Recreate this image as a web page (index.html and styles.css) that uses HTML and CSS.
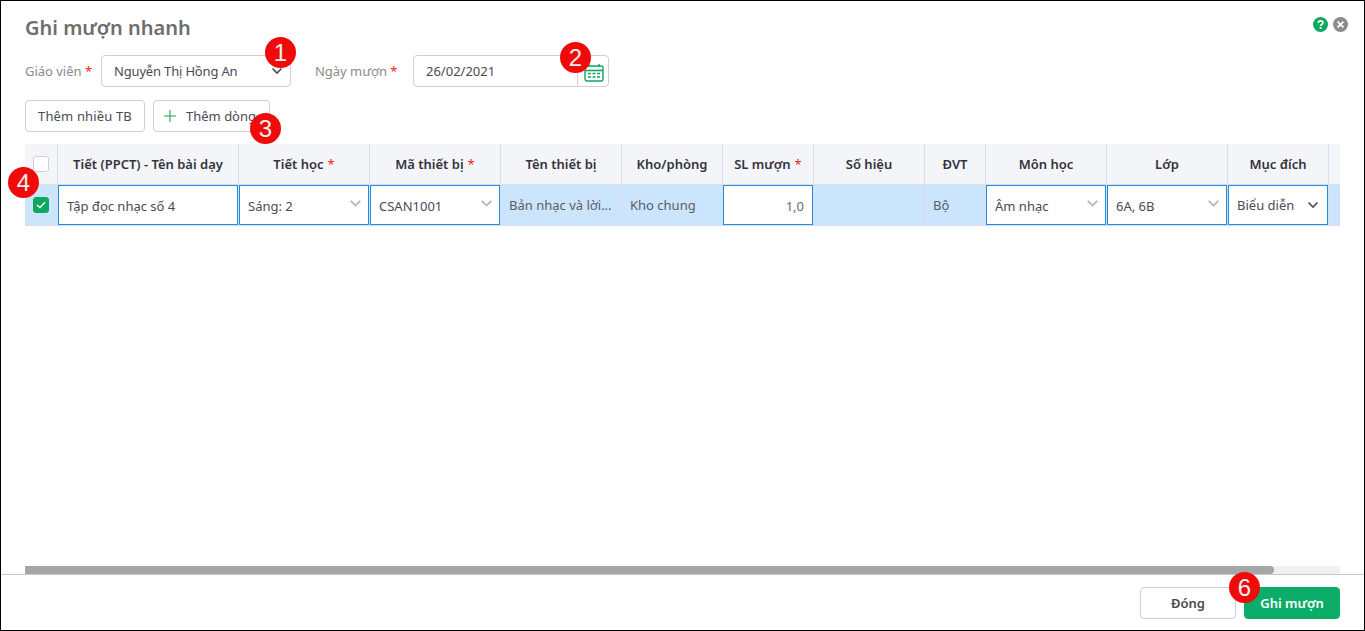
FILE: index.html
```html
<!DOCTYPE html>
<html lang="vi">
<head>
<meta charset="utf-8">
<title>Ghi mượn nhanh</title>
<link rel="stylesheet" href="styles.css">
</head>
<body>
<div class="modal">
  <header class="head">
    <h1 class="title">Ghi mượn nhanh</h1>
    <div class="head-icons">
      <svg class="ico" width="15" height="15" viewBox="0 0 15 15"><circle cx="7.5" cy="7.5" r="7.5" fill="#10a760"/><path d="M5.2 5.8c.2-1.3 1.2-1.9 2.4-1.9 1.3 0 2.3.8 2.3 1.9 0 1.8-2.3 1.7-2.3 3.2" fill="none" stroke="#fff" stroke-width="1.8"/><rect x="6.7" y="10" width="1.8" height="1.8" fill="#fff"/></svg>
      <svg class="ico" width="15" height="15" viewBox="0 0 15 15"><circle cx="7.5" cy="7.5" r="7.5" fill="#8c8c8c"/><path d="M4.6 4.6l5.8 5.8M10.4 4.6l-5.8 5.8" stroke="#fff" stroke-width="1.8"/></svg>
    </div>
  </header>
  <div class="filters">
    <label class="lbl lbl-gv">Giáo viên <span class="req">*</span></label>
    <div class="field field-gv">
      <span>Nguyễn Thị Hồng An</span>
      <svg class="chev" width="12" height="8" viewBox="0 0 12 8"><path d="M1.5 1.5L6 6l4.5-4.5" fill="none" stroke="#4a4a5a" stroke-width="1.6"/></svg>
    </div>
    <label class="lbl lbl-nm">Ngày mượn <span class="req">*</span></label>
    <div class="field field-date">
      <span class="date-val">26/02/2021</span>
      <span class="date-btn">
        <svg width="20" height="19" viewBox="0 0 20 19"><rect x="1" y="3" width="18" height="15" rx="2" fill="none" stroke="#10a760" stroke-width="1.4"/><path d="M1 7.5h18" stroke="#10a760" stroke-width="1.6"/><path d="M5 1v3M15 1v3" stroke="#10a760" stroke-width="1.4"/><path d="M4 10.5h3M8.5 10.5h3M13 10.5h3M4 14h3M8.5 14h3M13 14h3" stroke="#10a760" stroke-width="1.5"/></svg>
      </span>
    </div>
  </div>
  <div class="actions">
    <button class="btn btn-many">Thêm nhiều TB</button>
    <button class="btn btn-add">
      <svg width="14" height="14" viewBox="0 0 14 14"><path d="M7 1v12M1 7h12" stroke="#19a84a" stroke-width="1.1"/></svg>
      <span>Thêm dòng</span>
    </button>
  </div>
  <div class="grid-wrap">
    <div class="grid">
      <div class="th th-check"><span class="cb"></span></div>
      <div class="th">Tiết (PPCT) - Tên bài dạy</div>
      <div class="th">Tiết học <span class="req">*</span></div>
      <div class="th">Mã thiết bị <span class="req">*</span></div>
      <div class="th">Tên thiết bị</div>
      <div class="th">Kho/phòng</div>
      <div class="th">SL mượn <span class="req">*</span></div>
      <div class="th">Số hiệu</div>
      <div class="th">ĐVT</div>
      <div class="th">Môn học</div>
      <div class="th">Lớp</div>
      <div class="th">Mục đích</div>
      <div class="th th-end"></div>

      <div class="td td-check">
        <span class="cb cb-on"><svg width="10" height="8" viewBox="0 0 10 8"><path d="M1 4l3 2.6L9 1.2" fill="none" stroke="#fff" stroke-width="1.4"/></svg></span>
      </div>
      <div class="td"><div class="inp">Tập đọc nhạc số 4</div></div>
      <div class="td"><div class="inp inp-sel">Sáng: 2<svg class="chev-s" width="11" height="7" viewBox="0 0 11 7"><path d="M.7 .8L5.5 5.6 10.3 .8" fill="none" stroke="#b4b6c4" stroke-width="1.8"/></svg></div></div>
      <div class="td"><div class="inp inp-sel">CSAN1001<svg class="chev-s" width="11" height="7" viewBox="0 0 11 7"><path d="M.7 .8L5.5 5.6 10.3 .8" fill="none" stroke="#b4b6c4" stroke-width="1.8"/></svg></div></div>
      <div class="td td-text"><span class="ellip">Bản nhạc và lời...</span></div>
      <div class="td td-text">Kho chung</div>
      <div class="td"><div class="inp inp-num">1,0</div></div>
      <div class="td td-text"></div>
      <div class="td td-text">Bộ</div>
      <div class="td"><div class="inp inp-sel">Âm nhạc<svg class="chev-s" width="11" height="7" viewBox="0 0 11 7"><path d="M.7 .8L5.5 5.6 10.3 .8" fill="none" stroke="#b4b6c4" stroke-width="1.8"/></svg></div></div>
      <div class="td"><div class="inp inp-sel">6A, 6B<svg class="chev-s" width="11" height="7" viewBox="0 0 11 7"><path d="M.7 .8L5.5 5.6 10.3 .8" fill="none" stroke="#b4b6c4" stroke-width="1.8"/></svg></div></div>
      <div class="td"><div class="inp inp-sel inp-last">Biểu diễn<svg class="chev-l" width="12" height="8" viewBox="0 0 12 8"><path d="M1.5 1.5L6 6l4.5-4.5" fill="none" stroke="#4a4a5a" stroke-width="1.6"/></svg></div></div>
      <div class="td td-end"></div>
    </div>
    <div class="scroll"><div class="thumb"></div></div>
  </div>
  <footer class="foot">
    <button class="btn btn-close">Đóng</button>
    <button class="btn btn-save">Ghi mượn</button>
  </footer>
  <span class="badge b1">1</span>
  <span class="badge b2">2</span>
  <span class="badge b3">3</span>
  <span class="badge b4">4</span>
  <span class="badge b6">6</span>
</div>
</body>
</html>
```

FILE: styles.css
```css
* { box-sizing: border-box; }
html, body { margin: 0; padding: 0; height: 100%; background: #fff; overflow: hidden; }
body { font-family: "Noto Sans", "Open Sans", sans-serif; font-size: 13px; color: #4a4a55; }
.modal { position: relative; width: 1365px; height: 631px; border: 1px solid #000; display: flex; flex-direction: column; background: #fff; }
.head { height: 54px; padding: 13px 16px 0 24px; display: flex; justify-content: space-between; align-items: flex-start; flex: none; }
.title { margin: 0; font-size: 20px; line-height: 27px; font-weight: 600; color: #6e6e6e; }
.head-icons { display: flex; gap: 5px; padding: 3px 0 0 0; }
.ico { display: block; }
.filters { display: flex; align-items: center; height: 32px; padding-left: 24px; flex: none; }
.lbl { color: #8a8a8a; font-size: 13px; white-space: nowrap; letter-spacing: -.02px; }
.req { color: #f01c1c; }
.lbl-gv { width: 76px; }
.lbl-nm { width: 98px; margin-left: 24px; }
.field { height: 32px; border: 1px solid #cfcfcf; border-radius: 4px; display: flex; align-items: center; color: #4a4a55; }
.field-gv { width: 190px; padding: 0 7px 0 12px; justify-content: space-between; letter-spacing: -.17px; }
.field-date { width: 196px; padding-left: 12px; justify-content: space-between; }
.date-val { flex: 1; }
.date-btn { width: 31px; height: 30px; border-left: 1px solid #cfcfcf; display: flex; align-items: center; justify-content: center; padding: 2px 0 0 2px; }
.actions { display: flex; gap: 8px; padding: 13px 0 0 24px; flex: none; }
.btn { font-family: inherit; font-size: 13px; height: 32px; border: 1px solid #cfcfcf; border-radius: 4px; background: #fff; color: #4a4a55; padding: 0; cursor: pointer; letter-spacing: .15px; }
.btn-many { width: 120px; }
.btn-add { width: 117px; display: flex; align-items: center; gap: 9px; padding-left: 9px; letter-spacing: 0; }
.grid-wrap { flex: 1; padding: 12px 24px 0 24px; display: flex; flex-direction: column; justify-content: space-between; min-height: 0; }
.grid { display: grid; grid-template-columns: 33px 181px 131px 131px 121px 101px 91px 111px 61px 121px 121px 101px 11px; grid-template-rows: 41px 41px; }
.th { background: #f4f5f9; border-right: 1px solid #dcdcec; border-bottom: 1px solid #dcdcec; display: flex; align-items: center; justify-content: center; font-weight: 600; color: #33333d; font-size: 13px; white-space: nowrap; }
.th .req { margin-left: 4px; font-weight: 400; }
.th-end { border-right: 0; }
.td { background: #cbe5fc; border-right: 1px solid #dcdcec; border-bottom: 1px solid #dcdcec; display: flex; align-items: stretch; min-width: 0; }
.td-end { border-right: 0; }
.th-check, .td-check { align-items: center; justify-content: center; }
.td-text { align-items: center; padding-left: 8px; color: #5c5c68; white-space: nowrap; overflow: hidden; }
.cb { width: 16px; height: 16px; border-radius: 3px; border: 1px solid #cfcfcf; background: #fff; display: flex; align-items: center; justify-content: center; }
.cb-on { background: #10a760; border-color: #10a760; }
.inp { flex: 1; background: #fff; border: 1px solid #1a8fe3; display: flex; align-items: center; padding-left: 8px; color: #4a4a55; white-space: nowrap; min-width: 0; padding-top: 1px; }
.inp-sel { justify-content: space-between; padding-right: 7px; }
.chev-s { margin-bottom: 4px; }
.inp-last { padding-top: 0; padding-right: 8px; }
.inp-num { justify-content: flex-end; padding-right: 8px; color: #6a6a74; }
.scroll { height: 8px; background: #f0f0f0; flex: none; }
.thumb { width: 1249px; height: 8px; background: #a6a6a6; border-radius: 0 4px 4px 0; }
.foot { height: 56px; flex: none; border-top: 1px solid #c8c8c8; display: flex; justify-content: flex-end; gap: 8px; padding: 12px 24px 0 0; }
.btn-close { width: 96px; font-weight: 600; color: #4a4a55; letter-spacing: 0; }
.btn-save { width: 96px; background: #0bad69; border-color: #0bad69; color: #fff; font-weight: 600; letter-spacing: 0; }
.badge { position: absolute; width: 31px; height: 31px; border-radius: 50%; background: #f00a0a; color: #f0f0f0; font-family: "Liberation Sans", Arial, sans-serif; font-size: 24px; line-height: 31px; text-align: center; }
.b1 { left: 264px; top: 36px; }
.b2 { left: 559px; top: 41px; }
.b3 { left: 249px; top: 112px; }
.b4 { left: 7px; top: 166px; }
.b6 { left: 1228px; top: 571px; }
```
